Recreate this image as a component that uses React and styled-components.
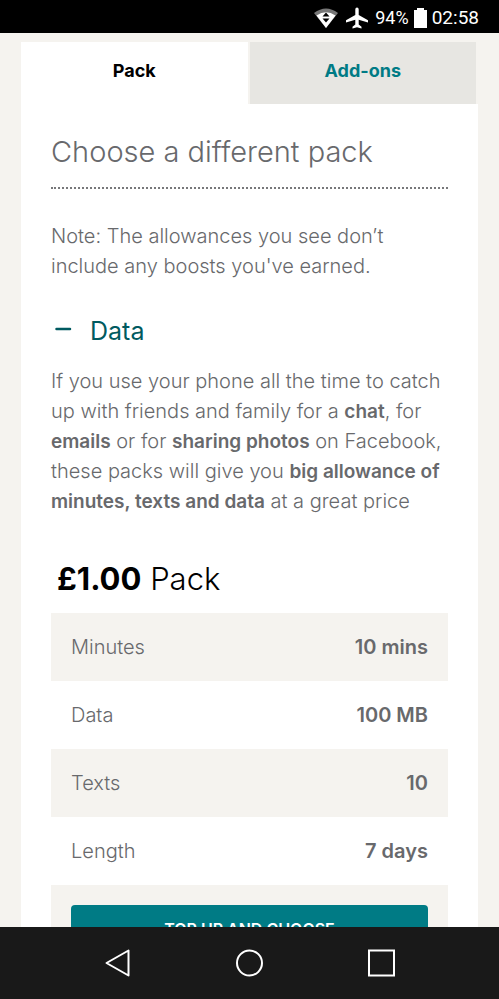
import React from "react";
import styled, { createGlobalStyle } from "styled-components";

const GlobalStyle = createGlobalStyle`
  * {
    box-sizing: border-box;
  }
  body {
    margin: 0;
    background: #f5f3ef;
    color: #68696c;
    font-family: Inter, "Liberation Sans", sans-serif;
    font-size: 20px;
    font-weight: 300;
    line-height: 30px;
  }
`;

const Screen = styled.div`
  display: flex;
  flex-direction: column;
  height: 100vh;
`;

// phone status bar
const StatusBar = styled.header`
  display: flex;
  flex: none;
  align-items: center;
  justify-content: flex-end;
  gap: 5px;
  height: 33px;
  padding: 2px 20px 0;
  background: black;
  color: white;
  font-family: Roboto, sans-serif;
  font-size: 18px;
  font-weight: 400;
`;

const StatusIcon = styled.svg`
  display: block;
  margin-right: ${props => props.$gap || "0"};
`;

const Clock = styled.time`
  font-size: 19px;
`;

const Page = styled.main`
  flex: 1;
  min-height: 0;
  overflow: hidden;
  padding: 9px 21px 0;
`;

const Tabs = styled.div`
  display: flex;
  gap: 2px;
  padding-right: 2px;
  background: #f5f3ef;
`;

const Tab = styled.button`
  flex: 1;
  height: 62px;
  padding: 0 0 4px;
  border: 0;
  background: ${props => (props.$active ? "white" : "#e7e6e2")};
  color: ${props => (props.$active ? "black" : "#007b85")};
  font: inherit;
  font-size: 18px;
  font-weight: 700;
`;

const Panel = styled.section`
  padding: 28px 30px 0;
  background: white;
`;

const Title = styled.h1`
  margin: 0 0 32px;
  padding-bottom: 15px;
  border-bottom: 2px dotted #77787a;
  font-size: 29px;
  font-weight: 300;
  line-height: 40px;
`;

const Text = styled.p`
  margin: 0;

  b {
    font-size: 19px;
    font-weight: 600;
    line-height: 28px;
  }
`;

const Toggle = styled.button`
  display: flex;
  align-items: center;
  gap: 18px;
  margin: 33px 0 18px;
  padding: 0 0 0 4px;
  border: 0;
  background: none;
  color: #005a60;
  font: inherit;
  font-size: 25px;
  font-weight: 400;
  line-height: 34px;
`;

const PackName = styled.h2`
  margin: 44px 0 15px;
  padding-left: 6px;
  color: black;
  font-size: 31px;
  font-weight: 300;
  line-height: 38px;

  b {
    font-weight: 700;
  }
`;

const Allowances = styled.table`
  width: 100%;
  border-collapse: collapse;

  tr:nth-child(odd) {
    background: #f5f3ef;
  }
`;

const Label = styled.th`
  height: 68px;
  padding: 0 20px;
  font-weight: 300;
  text-align: left;
`;

const Value = styled.td`
  padding: 0 20px;
  font-weight: 600;
  text-align: right;
`;

const Action = styled.div`
  padding: 20px;
  background: #f5f3ef;
`;

const TopUpButton = styled.button`
  width: 100%;
  height: 48px;
  border: 0;
  border-radius: 4px;
  background: #007b85;
  color: white;
  font: inherit;
  font-size: 16px;
  font-weight: 600;
`;

// phone navigation bar
const NavBar = styled.nav`
  display: flex;
  flex: none;
  align-items: center;
  justify-content: center;
  gap: 100px;
  height: 72px;
  background: #191919;
`;

const NavButton = styled.button`
  padding: 0;
  border: 0;
  background: none;

  svg {
    display: block;
  }
`;

const allowances = [
  ["Minutes", "10 mins"],
  ["Data", "100 MB"],
  ["Texts", "10"],
  ["Length", "7 days"]
];

const NavIcon = ({ children }) => (
  <svg width="32" height="32" viewBox="0 0 32 32" fill="none" stroke="white" strokeWidth="2">
    {children}
  </svg>
);

const App = () => {
  return (
    <Screen>
      <GlobalStyle />
      <StatusBar>
        <StatusIcon $gap="3px" width="24" height="20" viewBox="0 0 24 20">
          <path d="M0 5Q12-4 24 5L12 20Z" fill="#777" />
          <path d="M2.5 7.5Q12 1 21.5 7.5L12 20Z" fill="white" />
          <path d="M8.5 8.5L12 4.5L15.5 8.5ZM8.5 10.5H15.5L12 14.5Z" fill="black" />
        </StatusIcon>
        <StatusIcon $gap="2px" width="22" height="22" viewBox="0 0 22 22">
          <path
            d="M9.3 2.5a1.7 2 0 0 1 3.4 0V8L22 13.2V15.5L12.7 12.7V17.5L15.5 19.7V21.5L11 20.3L6.5 21.5V19.7L9.3 17.5V12.7L0 15.5V13.2L9.3 8Z"
            fill="white"
          />
        </StatusIcon>
        <span>94%</span>
        <StatusIcon width="13" height="20" viewBox="0 0 13 20">
          <path d="M3 0H10V2H13V20H0V2H3Z" fill="white" />
        </StatusIcon>
        <Clock>02:58</Clock>
      </StatusBar>
      <Page>
        <Tabs role="tablist">
          <Tab role="tab" aria-selected="true" $active>
            Pack
          </Tab>
          <Tab role="tab" aria-selected="false">
            Add-ons
          </Tab>
        </Tabs>
        <Panel>
          <Title>Choose a different pack</Title>
          <Text>
            Note: The allowances you see don’t include any boosts you've earned.
          </Text>
          <Toggle aria-expanded="true">
            <svg width="17" height="8" viewBox="0 0 17 8">
              <path d="M1.5 2H15" stroke="currentColor" strokeWidth="2.5" strokeLinecap="round" />
            </svg>
            Data
          </Toggle>
          <Text>
            If you use your phone all the time to catch up with friends and
            family for a <b>chat</b>, for <b>emails</b> or for{" "}
            <b>sharing photos</b> on Facebook, these packs will give you{" "}
            <b>big allowance of minutes, texts and data</b> at a great price
          </Text>
          <PackName>
            <b>£1.00</b> Pack
          </PackName>
          <Allowances>
            <tbody>
              {allowances.map(([label, value]) => (
                <tr key={label}>
                  <Label scope="row">{label}</Label>
                  <Value>{value}</Value>
                </tr>
              ))}
            </tbody>
          </Allowances>
          <Action>
            <TopUpButton>TOP UP AND CHOOSE</TopUpButton>
          </Action>
        </Panel>
      </Page>
      <NavBar>
        <NavButton aria-label="Back">
          <NavIcon>
            <path d="M4.5 16L26.5 3.5V28.5Z" strokeLinejoin="round" />
          </NavIcon>
        </NavButton>
        <NavButton aria-label="Home">
          <NavIcon>
            <circle cx="15.5" cy="16" r="12.5" />
          </NavIcon>
        </NavButton>
        <NavButton aria-label="Recent apps">
          <NavIcon>
            <rect x="3" y="3.5" width="25" height="25" />
          </NavIcon>
        </NavButton>
      </NavBar>
    </Screen>
  );
};

export default App;
